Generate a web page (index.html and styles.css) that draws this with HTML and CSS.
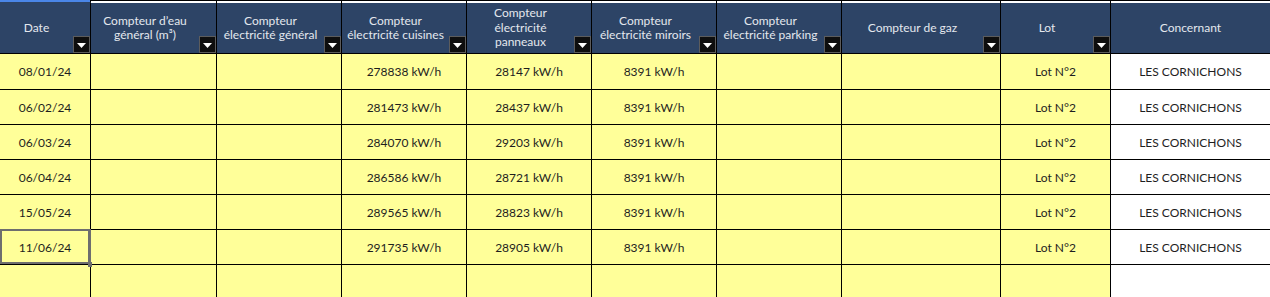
FILE: index.html
```html
<!DOCTYPE html>
<html lang="fr">
<head>
<meta charset="utf-8">
<title>Relevés compteurs</title>
<link rel="stylesheet" href="styles.css">
</head>
<body>
<div class="sheet">
  <div class="strip strip-sel"></div><div class="strip"></div><div class="strip"></div><div class="strip"></div><div class="strip"></div><div class="strip"></div><div class="strip"></div><div class="strip"></div><div class="strip"></div><div class="strip strip-last"></div>

  <div class="hd"><span class="hd-text">Date</span><span class="filter"><svg viewBox="0 0 9 5" width="9" height="5"><polygon points="0,0 9,0 4.5,5" fill="#fff"/></svg></span></div>
  <div class="hd"><span class="hd-text">Compteur d’eau<br>général (m³)</span><span class="filter"><svg viewBox="0 0 9 5" width="9" height="5"><polygon points="0,0 9,0 4.5,5" fill="#fff"/></svg></span></div>
  <div class="hd"><span class="hd-text">Compteur<br>électricité général</span><span class="filter"><svg viewBox="0 0 9 5" width="9" height="5"><polygon points="0,0 9,0 4.5,5" fill="#fff"/></svg></span></div>
  <div class="hd"><span class="hd-text">Compteur<br>électricité cuisines</span><span class="filter"><svg viewBox="0 0 9 5" width="9" height="5"><polygon points="0,0 9,0 4.5,5" fill="#fff"/></svg></span></div>
  <div class="hd"><span class="hd-text">Compteur<br>électricité<br>panneaux</span><span class="filter"><svg viewBox="0 0 9 5" width="9" height="5"><polygon points="0,0 9,0 4.5,5" fill="#fff"/></svg></span></div>
  <div class="hd"><span class="hd-text">Compteur<br>électricité miroirs</span><span class="filter"><svg viewBox="0 0 9 5" width="9" height="5"><polygon points="0,0 9,0 4.5,5" fill="#fff"/></svg></span></div>
  <div class="hd"><span class="hd-text">Compteur<br>électricité parking</span><span class="filter"><svg viewBox="0 0 9 5" width="9" height="5"><polygon points="0,0 9,0 4.5,5" fill="#fff"/></svg></span></div>
  <div class="hd"><span class="hd-text">Compteur de gaz</span><span class="filter"><svg viewBox="0 0 9 5" width="9" height="5"><polygon points="0,0 9,0 4.5,5" fill="#fff"/></svg></span></div>
  <div class="hd"><span class="hd-text">Lot</span><span class="filter"><svg viewBox="0 0 9 5" width="9" height="5"><polygon points="0,0 9,0 4.5,5" fill="#fff"/></svg></span></div>
  <div class="hd hd-last"><span class="hd-text">Concernant</span></div>

  <div class="c">08/01/24</div><div class="c"></div><div class="c"></div><div class="c">278838 kW/h</div><div class="c">28147 kW/h</div><div class="c">8391 kW/h</div><div class="c"></div><div class="c"></div><div class="c">Lot N°2</div><div class="c w">LES CORNICHONS</div>
  <div class="c">06/02/24</div><div class="c"></div><div class="c"></div><div class="c">281473 kW/h</div><div class="c">28437 kW/h</div><div class="c">8391 kW/h</div><div class="c"></div><div class="c"></div><div class="c">Lot N°2</div><div class="c w">LES CORNICHONS</div>
  <div class="c">06/03/24</div><div class="c"></div><div class="c"></div><div class="c">284070 kW/h</div><div class="c">29203 kW/h</div><div class="c">8391 kW/h</div><div class="c"></div><div class="c"></div><div class="c">Lot N°2</div><div class="c w">LES CORNICHONS</div>
  <div class="c">06/04/24</div><div class="c"></div><div class="c"></div><div class="c">286586 kW/h</div><div class="c">28721 kW/h</div><div class="c">8391 kW/h</div><div class="c"></div><div class="c"></div><div class="c">Lot N°2</div><div class="c w">LES CORNICHONS</div>
  <div class="c">15/05/24</div><div class="c"></div><div class="c"></div><div class="c">289565 kW/h</div><div class="c">28823 kW/h</div><div class="c">8391 kW/h</div><div class="c"></div><div class="c"></div><div class="c">Lot N°2</div><div class="c w">LES CORNICHONS</div>
  <div class="c selected">11/06/24</div><div class="c"></div><div class="c"></div><div class="c">291735 kW/h</div><div class="c">28905 kW/h</div><div class="c">8391 kW/h</div><div class="c"></div><div class="c"></div><div class="c">Lot N°2</div><div class="c w">LES CORNICHONS</div>
  <div class="c"></div><div class="c"></div><div class="c"></div><div class="c"></div><div class="c"></div><div class="c"></div><div class="c"></div><div class="c"></div><div class="c"></div><div class="c w"></div>
</div>
</body>
</html>
```

FILE: styles.css
```css
* { box-sizing: border-box; }

html, body {
  margin: 0;
  padding: 0;
  background: #ffffff;
  overflow: hidden;
}

.sheet {
  display: grid;
  grid-template-columns: 91px 126px 125px 125px 125px 125px 125px 159px 110px 159px;
  grid-template-rows: 3px 51px 36px 35px 35px 35px 35px 35px 40px;
  width: 1270px;
  font-family: Lato, "Open Sans", sans-serif;
}

.strip {
  background: #ffffff;
  border-top: 1px solid #000;
  border-right: 1px solid #000;
}
.strip-sel {
  background: #4a86e8;
  border-top: 0;
  border-bottom: 1px solid #2d4466;
}
.strip-last { border-right: 0; }

.hd {
  position: relative;
  background: #2d4466;
  border-right: 1px solid #000;
  border-bottom: 1px solid #000;
  display: flex;
  align-items: center;
  justify-content: center;
  padding-right: 17px;
  color: #e4e8ee;
  font-size: 12px;
  line-height: 14.5px;
  text-align: center;
}
.hd-last {
  border-right: 0;
  padding-right: 0;
}

.filter {
  position: absolute;
  right: 0;
  bottom: 0;
  width: 17px;
  height: 17px;
  background: #0e0e0e;
  border: 1px solid #5c5c5c;
  display: flex;
  align-items: center;
  justify-content: center;
}
.filter svg { display: block; margin-top: 1px; }

.c {
  position: relative;
  background: #ffff99;
  border-right: 1px solid #000;
  border-bottom: 1px solid #000;
  display: flex;
  align-items: center;
  justify-content: center;
  color: #1e1e1e;
  font-size: 12px;
  white-space: nowrap;
}
.c.w {
  background: #ffffff;
  border-right: 0;
}

.selected::after {
  content: "";
  position: absolute;
  top: -1px;
  left: 0;
  right: -1px;
  bottom: 0;
  border: 2px solid #6e6e6e;
  border-right-width: 3px;
}
.selected::before {
  content: "";
  position: absolute;
  right: -2px;
  bottom: -3px;
  width: 4px;
  height: 5px;
  background: #6e6e6e;
  z-index: 1;
}
```
